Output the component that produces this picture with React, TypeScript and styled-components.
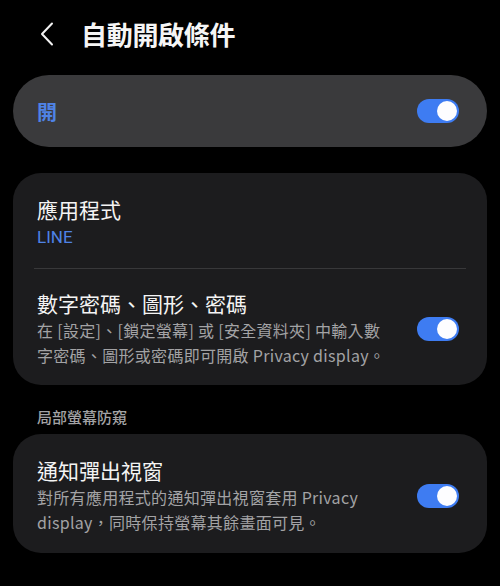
import React, { useState } from "react";
import styled, { createGlobalStyle } from "styled-components";

const GlobalStyle = createGlobalStyle`
  html, body {
    margin: 0;
    padding: 0;
    background: #000;
  }
  body {
    font-family: "Noto Sans CJK TC", "Noto Sans", sans-serif;
    color: #f4f4f4;
  }
`;

const Page = styled.div`
  width: 500px;
  height: 586px;
  padding: 0 13px;
  box-sizing: border-box;
  background: #000;
  overflow: hidden;
`;

const Header = styled.header`
  display: flex;
  align-items: center;
  height: 67px;
  padding-left: 26px;
  gap: 26px;
  margin-bottom: 8px;
`;

const BackButton = styled.button`
  display: flex;
  align-items: center;
  justify-content: center;
  width: 16px;
  height: 26px;
  padding: 0;
  border: 0;
  background: none;
  cursor: pointer;
`;

const Title = styled.h1`
  margin: 0;
  font-size: 26px;
  font-weight: 700;
  letter-spacing: -0.3px;
  color: #f5f5f5;
`;

const MasterCard = styled.div`
  display: flex;
  align-items: center;
  justify-content: space-between;
  height: 72px;
  padding: 0 28px 0 24px;
  border-radius: 36px;
  background: #3a3a3c;
  margin-bottom: 26px;
`;

const MasterLabel = styled.span`
  font-size: 20px;
  font-weight: 700;
  color: #4f83e6;
`;

const Card = styled.section`
  background: #1c1c1e;
  border-radius: 28px;
  overflow: hidden;
`;

const Row = styled.div<{ $pt?: number; $pb?: number }>`
  display: flex;
  align-items: center;
  gap: 28px;
  padding: ${(p) => p.$pt ?? 21}px 28px ${(p) => p.$pb ?? 18}px 24px;
`;

const RowText = styled.div`
  flex: 1;
  min-width: 0;
`;

const RowTitle = styled.div`
  font-size: 21px;
  line-height: 28px;
  font-weight: 400;
  color: #f4f4f4;
`;

const RowValue = styled.div`
  font-family: "Roboto", "Noto Sans CJK TC", sans-serif;
  font-size: 17px;
  line-height: 22px;
  margin-top: 3px;
  color: #4f83e6;
`;

const RowDesc = styled.div`
  font-size: 16px;
  line-height: 25px;
  letter-spacing: 0.3px;
  margin-top: 1px;
  color: #a3a3a5;
`;

const Divider = styled.hr`
  margin: 0 21px;
  border: 0;
  height: 1px;
  background: #38383a;
`;

const SectionLabel = styled.div`
  font-size: 15px;
  font-weight: 500;
  line-height: 20px;
  color: #a3a3a5;
  padding: 22px 24px 7px;
`;

const Track = styled.button<{ $on: boolean }>`
  flex: none;
  position: relative;
  width: 42px;
  height: 24px;
  padding: 0;
  border: 0;
  border-radius: 12px;
  background: ${(p) => (p.$on ? "#3e7cf2" : "#5a5a5e")};
  cursor: pointer;
`;

const Knob = styled.span<{ $on: boolean }>`
  position: absolute;
  top: 2px;
  left: ${(p) => (p.$on ? "20px" : "2px")};
  width: 20px;
  height: 20px;
  border-radius: 50%;
  background: #fdfdff;
  transition: left 0.15s;
`;

const Toggle = ({ initial = true }: { initial?: boolean }) => {
  const [on, setOn] = useState(initial);
  return (
    <Track $on={on} onClick={() => setOn(!on)} aria-pressed={on}>
      <Knob $on={on} />
    </Track>
  );
};

const App = () => {
  return (
    <Page>
      <GlobalStyle />
      <Header>
        <BackButton aria-label="back">
          <svg width="14" height="24" viewBox="0 0 14 24" fill="none">
            <path
              d="M12 1.5 L2 12 L12 22.5"
              stroke="#f2f2f2"
              strokeWidth="2"
              strokeLinecap="round"
              strokeLinejoin="round"
            />
          </svg>
        </BackButton>
        <Title>自動開啟條件</Title>
      </Header>

      <MasterCard>
        <MasterLabel>開</MasterLabel>
        <Toggle />
      </MasterCard>

      <Card>
        <Row $pt={22} $pb={20}>
          <RowText>
            <RowTitle>應用程式</RowTitle>
            <RowValue>LINE</RowValue>
          </RowText>
        </Row>
        <Divider />
        <Row $pt={20} $pb={17}>
          <RowText>
            <RowTitle>數字密碼、圖形、密碼</RowTitle>
            <RowDesc>
              在 [設定]、[鎖定螢幕] 或 [安全資料夾] 中輸入數字密碼、圖形或密碼即可開啟 Privacy display。
            </RowDesc>
          </RowText>
          <Toggle />
        </Row>
      </Card>

      <SectionLabel>局部螢幕防窺</SectionLabel>

      <Card>
        <Row $pt={22} $pb={18}>
          <RowText>
            <RowTitle>通知彈出視窗</RowTitle>
            <RowDesc>
              對所有應用程式的通知彈出視窗套用 Privacy display，同時保持螢幕其餘畫面可見。
            </RowDesc>
          </RowText>
          <Toggle />
        </Row>
      </Card>
    </Page>
  );
};

export default App;
